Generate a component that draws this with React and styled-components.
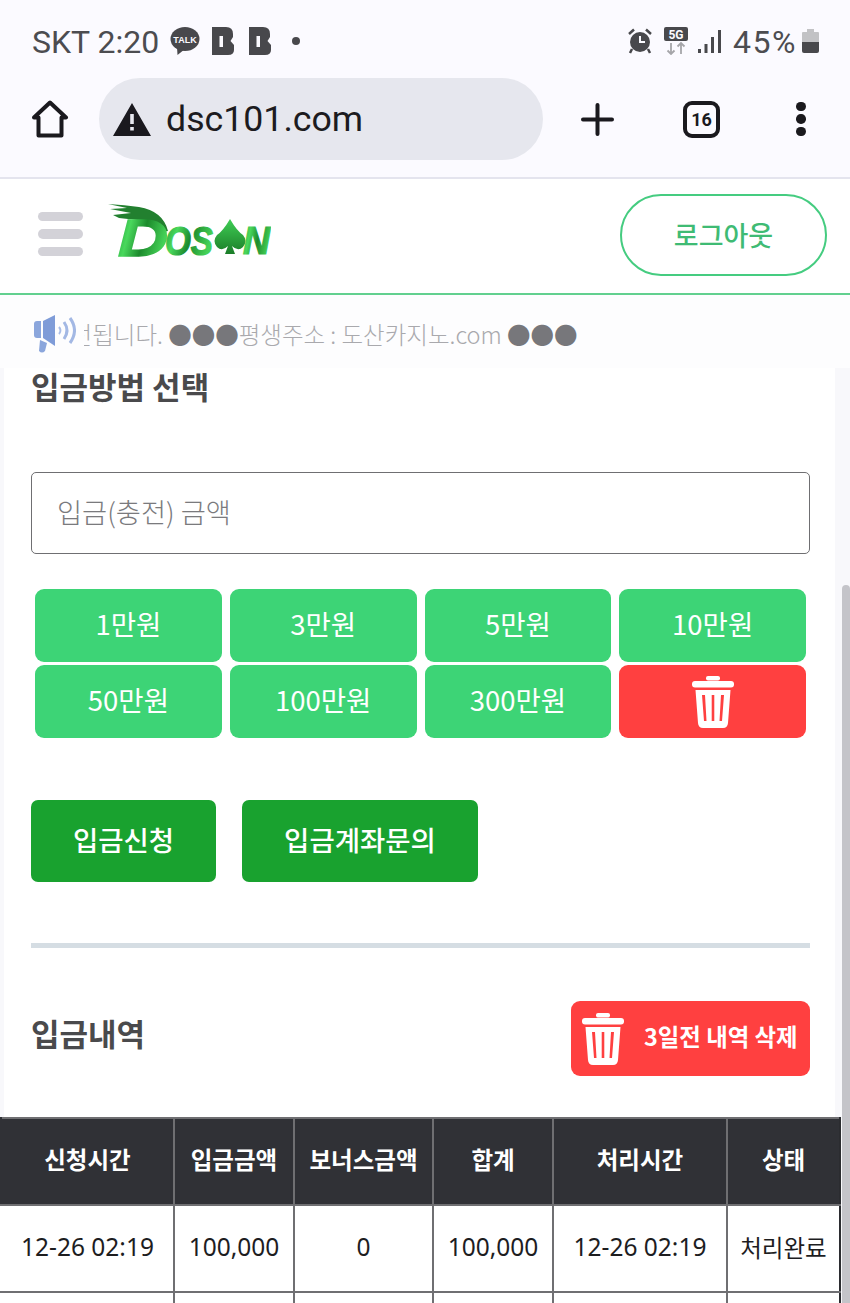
import styled, { createGlobalStyle } from "styled-components";

const GlobalStyle = createGlobalStyle`
  html, body {
    margin: 0;
    padding: 0;
    background: #fff;
  }
  * {
    box-sizing: border-box;
  }
`;

const KR = `"Noto Sans CJK KR", "Noto Sans", sans-serif`;

const Page = styled.div`
  position: relative;
  width: 850px;
  height: 1303px;
  overflow: hidden;
  background: #f8f8fb;
  font-family: ${KR};
`;

const Chrome = styled.div`
  background: #fbfaff;
  border-bottom: 2px solid #e4e4ee;
  padding-bottom: 17px;
`;

const StatusBar = styled.div`
  height: 78px;
  padding: 4px 31px 0 32px;
  display: flex;
  align-items: center;
  justify-content: space-between;
  font-family: Roboto, sans-serif;
  font-size: 32px;
  color: #4c4c50;
`;

const StatusGroup = styled.div`
  display: flex;
  align-items: center;
`;

const StatusText = styled.span`
  line-height: 36px;
  padding-top: 1px;
  white-space: nowrap;
  letter-spacing: ${(props) => props.$spread || 0}px;
`;

const Toolbar = styled.div`
  height: 82px;
  padding-left: 31px;
  display: flex;
  align-items: center;
`;

const UrlBar = styled.div`
  width: 444px;
  height: 82px;
  margin-left: 30px;
  margin-right: 38px;
  padding-left: 14px;
  border-radius: 41px;
  background: #e6e7ee;
  display: flex;
  align-items: center;
  gap: 15px;
  font-family: Roboto, sans-serif;
  font-size: 35.7px;
  color: #1c1b20;
`;

const TabCount = styled.div`
  width: 37px;
  height: 37px;
  margin: 0 76px 0 69px;
  border: 4px solid #1a191e;
  border-radius: 9px;
  display: flex;
  align-items: center;
  justify-content: center;
  font-family: Roboto, sans-serif;
  font-size: 18px;
  font-weight: 700;
  color: #1a191e;
`;

const MoreDots = styled.div`
  display: flex;
  flex-direction: column;
  gap: 3px;
  span {
    width: 9.5px;
    height: 9.5px;
    border-radius: 50%;
    background: #1a191e;
  }
`;

const SiteHeader = styled.div`
  height: 116px;
  padding: 0 23px 2px 38px;
  display: flex;
  align-items: center;
  justify-content: space-between;
  background: #fff;
  border-bottom: 2px solid #62d08f;
`;

const Brand = styled.div`
  display: flex;
  align-items: center;
  gap: 24px;
`;

const Burger = styled.div`
  width: 45px;
  margin-bottom: 2px;
  display: flex;
  flex-direction: column;
  gap: 8px;
  span {
    height: 9.5px;
    border-radius: 5px;
    background: #d3d2d8;
  }
`;

const LogoutButton = styled.button`
  width: 207px;
  height: 82px;
  padding: 0 0 2px;
  border: 2px solid #45cc80;
  border-radius: 41px;
  background: #fff;
  font-family: ${KR};
  font-size: 27px;
  font-weight: 500;
  color: #3fbb74;
`;

const Ticker = styled.div`
  height: 73px;
  padding: 4px 0 0 34px;
  background: #fdfdfe;
  display: flex;
  align-items: center;
  gap: 8px;
`;

const TickerWindow = styled.div`
  width: 600px;
  overflow: hidden;
`;

const TickerTrack = styled.div`
  margin-left: -35px;
  white-space: nowrap;
  font-size: 23.5px;
  font-weight: 300;
  line-height: 34px;
  color: #a9a9ad;
`;

const Dots = styled.span`
  color: #77777b;
`;

const Panel = styled.div`
  margin: 0 15px 0 4px;
  padding: 0 25px 41px 27px;
  background: #fff;
`;

const Heading = styled.h2`
  margin: 0;
  font-size: 31px;
  line-height: 36px;
  font-weight: 700;
  color: #4a4a4c;
  padding-bottom: ${(props) => props.$lift || 4}px;
  height: ${(props) => (props.$lift ? "auto" : "36px")};
`;

const AmountInput = styled.input`
  display: block;
  width: 100%;
  height: 82px;
  margin-top: 68px;
  padding: 0 25px 4px;
  border: 1.5px solid #6f6f72;
  border-radius: 5px;
  background: #fff;
  outline: none;
  font-family: ${KR};
  font-size: 27.3px;
  font-weight: 300;
  &::placeholder {
    color: #7a7a7d;
    opacity: 1;
  }
`;

const AmountGrid = styled.div`
  margin: 35px 0 0 4px;
  width: 771px;
  display: grid;
  grid-template-columns: repeat(4, 1fr);
  grid-auto-rows: 73px;
  column-gap: 8px;
  row-gap: 3px;
`;

const AmountButton = styled.button`
  border: 0;
  border-radius: 9px;
  background: ${(props) => (props.$danger ? "#ff4040" : "#3dd476")};
  color: #fff;
  font-family: ${KR};
  font-size: 27.5px;
  display: flex;
  align-items: center;
  justify-content: center;
  padding: 0 0 ${(props) => (props.$danger ? 0 : 5)}px;
`;

const Actions = styled.div`
  margin-top: 62px;
  display: flex;
  gap: 26px;
`;

const ActionButton = styled.button`
  width: ${(props) => props.$width}px;
  height: 82px;
  padding: 0 0 5px;
  border: 0;
  border-radius: 7px;
  background: #19a22f;
  color: #fff;
  font-family: ${KR};
  font-size: 27.5px;
  font-weight: 500;
`;

const Divider = styled.div`
  height: 5px;
  margin-top: 61px;
  background: #d5dde3;
`;

const HistoryHead = styled.div`
  margin-top: 53px;
  display: flex;
  align-items: center;
  justify-content: space-between;
`;

const PurgeButton = styled.button`
  width: 239px;
  height: 75px;
  padding: 0 0 0 11px;
  border: 0;
  border-radius: 9px;
  background: #ff4040;
  color: #fff;
  font-family: ${KR};
  font-size: 23.4px;
  font-weight: 700;
  display: flex;
  align-items: center;
  gap: 20px;
  white-space: nowrap;
`;

const PurgeLabel = styled.span`
  padding-bottom: 5px;
`;

const Table = styled.table`
  width: 839px;
  table-layout: fixed;
  border-collapse: collapse;
  background: #fff;
  border-top: 2px solid #6f6f72;
  border-right: 2px solid #2b2c30;
`;

const Th = styled.th`
  height: 87px;
  padding: 0 0 5px;
  background: #303136;
  border-left: 2px solid #6f6f72;
  border-bottom: 2px solid #6f6f72;
  color: #fff;
  font-size: 23.5px;
  font-weight: 700;
  &:first-child {
    border-left-color: #303136;
  }
`;

const Td = styled.td`
  height: 87px;
  padding: 0 0 4px;
  border-left: 2px solid #6f6f72;
  border-bottom: 2px solid #6f6f72;
  text-align: center;
  color: #1d1d1f;
  font-family: "Noto Sans", ${KR};
  font-size: 24.5px;
  &:first-child {
    border-left-color: #fff;
  }
  &:last-child {
    font-size: 23.5px;
  }
`;

const Scrollbar = styled.div`
  position: absolute;
  left: 842px;
  top: 585px;
  bottom: 0;
  width: 8px;
  border-radius: 4px 4px 0 0;
  background: #c4c4c9;
`;

const TrashIcon = ({ fill = "#fff" }) => (
  <svg width="42" height="52" viewBox="0 0 42 52" fill={fill}>
    <rect x="14" y="0" width="14" height="4.5" rx="2" />
    <rect x="0" y="5" width="42" height="6.5" rx="3" />
    <path
      fillRule="evenodd"
      d="M3.5 14H38.5L36 47Q35.6 52 31 52H11Q6.4 52 6 47ZM10 19L12 45H14.5L13 19ZM19.7 19V45H22.3V19ZM29 19L27.5 45H30L32 19Z"
    />
  </svg>
);

const TalkIcon = () => (
  <svg width="30" height="28" viewBox="0 0 30 28" style={{ marginLeft: 11 }}>
    <ellipse cx="15" cy="12" rx="14.5" ry="12" fill="#48484c" />
    <path d="M7 20L7.5 28L15 22Z" fill="#48484c" />
    <text
      x="15"
      y="15.5"
      textAnchor="middle"
      fontFamily="Liberation Sans, sans-serif"
      fontSize="9"
      fontWeight="700"
      fill="#fbfaff"
    >
      TALK
    </text>
  </svg>
);

const BlockIcon = ({ gap }) => (
  <svg width="22" height="28" viewBox="0 0 22 28" style={{ marginLeft: gap }}>
    <path
      fillRule="evenodd"
      d="M0 0H14Q21 0 21 7V10L18.5 14L22 18V23Q22 28 16 28H0ZM7.5 9V20H11V9Z"
      fill="#48484c"
    />
  </svg>
);

const AlarmIcon = () => (
  <svg width="24" height="26" viewBox="0 0 24 26">
    <circle cx="12" cy="14" r="10" fill="#48484c" />
    <path d="M12 8V14H17" stroke="#fbfaff" strokeWidth="2" fill="none" />
    <path d="M1 6L6 1.5M23 6L18 1.5" stroke="#48484c" strokeWidth="2.5" />
    <path d="M4 21L2 25M20 21L22 25" stroke="#48484c" strokeWidth="2.5" />
  </svg>
);

const NetworkIcon = () => (
  <svg width="24" height="28" viewBox="0 0 24 28" style={{ marginLeft: 12 }}>
    <rect width="24" height="14" rx="2" fill="#48484c" />
    <text
      x="12"
      y="11.5"
      textAnchor="middle"
      fontFamily="Roboto, sans-serif"
      fontSize="12"
      fontWeight="700"
      fill="#fbfaff"
    >
      5G
    </text>
    <path
      d="M7 16V27M3.5 23.5L7 27L10.5 23.5M17 27V16M13.5 19.5L17 16L20.5 19.5"
      stroke="#a5a5a9"
      strokeWidth="1.8"
      fill="none"
    />
  </svg>
);

const SignalIcon = () => (
  <svg
    width="23"
    height="24"
    viewBox="0 0 23 24"
    fill="#48484c"
    style={{ margin: "2px 12px 0 10px" }}
  >
    <rect x="0" y="19" width="3" height="4" />
    <rect x="6.5" y="14" width="3" height="9" />
    <rect x="13" y="7" width="3" height="16" />
    <rect x="20" y="0" width="3" height="23" />
  </svg>
);

const BatteryIcon = () => (
  <svg width="17" height="24" viewBox="0 0 17 24" style={{ marginLeft: 5 }}>
    <path d="M5 0H12V3H16Q17 3 17 4V13H0V4Q0 3 1 3H5Z" fill="#c2c2c5" />
    <path d="M0 13H17V22Q17 24 15 24H2Q0 24 0 22Z" fill="#48484c" />
  </svg>
);

const HomeIcon = () => (
  <svg width="38" height="38" viewBox="0 0 38 38" fill="none">
    <path
      d="M19 2.5L35 17.5H30.5V35.5H7.5V17.5H3Z"
      stroke="#1a191e"
      strokeWidth="4"
      strokeLinejoin="round"
    />
  </svg>
);

const WarningIcon = () => (
  <svg width="38" height="33" viewBox="0 0 38 33">
    <path
      fillRule="evenodd"
      d="M19 0L38 33H0ZM17.2 11V21H20.8V11ZM17.2 24V27.6H20.8V24Z"
      fill="#1a191e"
    />
  </svg>
);

const PlusIcon = () => (
  <svg width="33" height="33" viewBox="0 0 33 33" stroke="#1a191e" strokeWidth="4" strokeLinecap="round">
    <path d="M16.5 2V31M2 16.5H31" />
  </svg>
);

const SpeakerIcon = () => (
  <svg width="42" height="38" viewBox="0 0 42 38">
    <path d="M0 9Q0 6 3 6H7V23H3Q0 23 0 20Z" fill="#8ba6dc" />
    <path d="M9 6L21 0V31L9 23Z" fill="#7f9cd8" />
    <path d="M6 25L13 28L11 36Q8 39 5 36Z" fill="#8ba6dc" />
    <path d="M25 12Q28 15.5 25 19" stroke="#a9bde6" strokeWidth="2" fill="none" />
    <path d="M30 7Q36 15.5 30 24" stroke="#a3b8e4" strokeWidth="3" fill="none" />
    <path d="M36 3Q45 15.5 36 28" stroke="#a3b8e4" strokeWidth="3" fill="none" />
  </svg>
);

const logoLetter = {
  fontFamily: "Liberation Sans, sans-serif",
  fontWeight: 700,
  fontStyle: "italic",
  fill: "url(#logoGreen)",
  stroke: "url(#logoGreen)",
  lengthAdjust: "spacingAndGlyphs",
};

const Logo = () => (
  <svg width="164" height="64" viewBox="0 0 164 64">
    <defs>
      <linearGradient id="logoGreen" x1="0" y1="0" x2="1" y2="0.3">
        <stop offset="0" stopColor="#1f9a35" />
        <stop offset="0.3" stopColor="#49d85c" />
        <stop offset="0.6" stopColor="#1c8a2c" />
        <stop offset="1" stopColor="#45d257" />
      </linearGradient>
      <linearGradient id="spadeGreen" x1="0" y1="0" x2="0" y2="1">
        <stop offset="0" stopColor="#3fce55" />
        <stop offset="1" stopColor="#1b7d28" />
      </linearGradient>
    </defs>
    {/* brush strokes over the D */}
    <path
      d="M1 1L20 5L3 6L24 10L6 12L12 15L30 17Q46 18 50 30L61 28Q56 8 32 4Q18 2 1 1Z"
      fill="#22802f"
    />
    <text {...logoLetter} x="11" y="53" fontSize="52" strokeWidth="1.5" textLength="50">
      D
    </text>
    <text {...logoLetter} x="58" y="52" fontSize="40" strokeWidth="1.2" textLength="48">
      OS
    </text>
    <path
      d="M123 16Q130 28 136 32Q141 38 136 44Q131 49 125 43L128 51H118L121 43Q115 49 110 44Q105 38 110 32Q116 28 123 16Z"
      fill="url(#spadeGreen)"
    />
    <text {...logoLetter} x="136" y="51" fontSize="38" strokeWidth="1.2" textLength="27">
      N
    </text>
  </svg>
);

const amounts = ["1만원", "3만원", "5만원", "10만원", "50만원", "100만원", "300만원"];
const columns = [
  { title: "신청시간", width: 173 },
  { title: "입금금액", width: 120 },
  { title: "보너스금액", width: 139 },
  { title: "합계", width: 120 },
  { title: "처리시간", width: 174 },
  { title: "상태", width: 113 },
];
const rows = [
  ["12-26 02:19", "100,000", "0", "100,000", "12-26 02:19", "처리완료"],
  ["", "", "", "", "", ""],
];

const App = () => {
  return (
    <Page>
      <GlobalStyle />
      <Chrome>
        <StatusBar>
          <StatusGroup>
            <StatusText>SKT 2:20</StatusText>
            <TalkIcon />
            <BlockIcon gap={12} />
            <BlockIcon gap={15} />
            <svg width="8" height="8" style={{ marginLeft: 21 }}>
              <circle cx="4" cy="4" r="4" fill="#48484c" />
            </svg>
          </StatusGroup>
          <StatusGroup>
            <AlarmIcon />
            <NetworkIcon />
            <SignalIcon />
            <StatusText $spread={1.5}>45%</StatusText>
            <BatteryIcon />
          </StatusGroup>
        </StatusBar>
        <Toolbar>
          <HomeIcon />
          <UrlBar>
            <WarningIcon />
            <span>dsc101.com</span>
          </UrlBar>
          <PlusIcon />
          <TabCount>16</TabCount>
          <MoreDots>
            <span />
            <span />
            <span />
          </MoreDots>
        </Toolbar>
      </Chrome>

      <SiteHeader>
        <Brand>
          <Burger>
            <span />
            <span />
            <span />
          </Burger>
          <Logo />
        </Brand>
        <LogoutButton>로그아웃</LogoutButton>
      </SiteHeader>

      <Ticker>
        <SpeakerIcon />
        <TickerWindow>
          <TickerTrack>
            이전됩니다. <Dots>●●●</Dots>평생주소 : 도산카지노.com <Dots>●●●</Dots>
          </TickerTrack>
        </TickerWindow>
      </Ticker>

      <Panel>
        <Heading>입금방법 선택</Heading>
        <AmountInput placeholder="입금(충전) 금액" />
        <AmountGrid>
          {amounts.map((amount) => (
            <AmountButton key={amount}>{amount}</AmountButton>
          ))}
          <AmountButton $danger>
            <TrashIcon />
          </AmountButton>
        </AmountGrid>
        <Actions>
          <ActionButton $width={185}>입금신청</ActionButton>
          <ActionButton $width={236}>입금계좌문의</ActionButton>
        </Actions>
        <Divider />
        <HistoryHead>
          <Heading $lift={12}>입금내역</Heading>
          <PurgeButton>
            <TrashIcon />
            <PurgeLabel>3일전 내역 삭제</PurgeLabel>
          </PurgeButton>
        </HistoryHead>
      </Panel>

      <Table>
        <colgroup>
          {columns.map((col) => (
            <col key={col.title} width={col.width} />
          ))}
        </colgroup>
        <thead>
          <tr>
            {columns.map((col) => (
              <Th key={col.title}>{col.title}</Th>
            ))}
          </tr>
        </thead>
        <tbody>
          {rows.map((row, i) => (
            <tr key={i}>
              {row.map((cell, j) => (
                <Td key={j}>{cell}</Td>
              ))}
            </tr>
          ))}
        </tbody>
      </Table>

      <Scrollbar />
    </Page>
  );
};

export default App;
